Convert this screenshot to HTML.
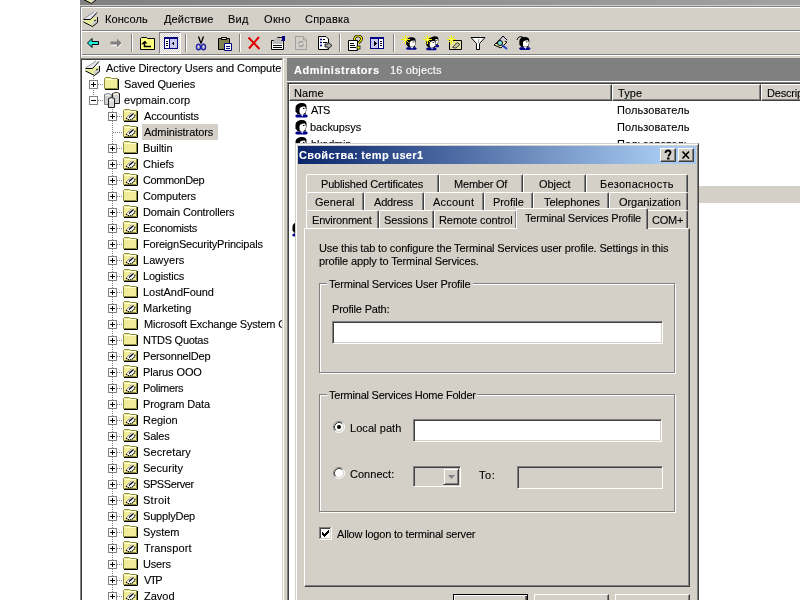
<!DOCTYPE html>
<html><head><meta charset="utf-8"><title>Active Directory Users and Computers</title>
<style>
html,body{margin:0;padding:0;width:800px;height:600px;overflow:hidden;background:#fff}
#scr{position:relative;will-change:transform;width:800px;height:600px;overflow:hidden;font-family:"Liberation Sans", sans-serif;font-size:11px;color:#000}
#scr div,#scr svg{position:absolute}
.t{white-space:pre;line-height:13px;font-size:11px;letter-spacing:-0.2px;-webkit-text-stroke:0.1px currentColor}
.b{font-weight:bold}
</style></head><body><div id="scr">
<svg width="0" height="0" style="position:absolute;left:0;top:0"><defs>
<g id="folder">
  <path d="M1.5 13.5V3.5L2.5 2.5H7.5L8.5 3.5H14.5V13.5Z" fill="#F0EC98" stroke="#8C8C40"/>
  <path d="M2 4.5H14" stroke="#FFFFD0"/>
  <path d="M15.5 4V14.5H2" stroke="#000" fill="none"/>
</g>
<g id="ou">
  <use href="#folder"/>
  <path d="M4 10.5L9.5 5.5L12.5 7L13 9.5L9.5 12.5L6.5 12.5Z" fill="#F8F8F8"/>
  <path d="M4.5 10.5L9.5 6" stroke="#909090" stroke-width="1"/>
  <path d="M4 11L6.5 12.8L9.5 12.8L13 9.5L12.8 7" stroke="#000" fill="none" stroke-width="1.1" stroke-dasharray="1.5 0.7"/>
  <path d="M7 10.5L11.5 6.5" stroke="#000" stroke-width="1.2"/>
</g>
<g id="domain">
  <path d="M0.5 2.5Q4 0.5 7.5 2.5V12.5H0.5Z" fill="#D0D0D0" stroke="#808080"/>
  <path d="M1.5 3.5Q4 2 6.5 3.5" stroke="#fff" fill="none"/>
  <path d="M8.5 1.5Q12 -0.5 15.5 1.5V11.5H8.5Z" fill="#D0D0D0" stroke="#202020"/>
  <path d="M9.5 2.5Q12 1 14.5 2.5" stroke="#F0F0D0" stroke-width="1.5" fill="none"/>
  <path d="M4.5 6.5Q7.5 4.5 10.5 6.5V15.5H4.5Z" fill="#D8D8D8" stroke="#202020"/>
  <path d="M5.5 8H9.5" stroke="#fff"/>
</g>
<g id="root">
  <path d="M0.5 11L9.5 15.5L14.5 11.5V6L7.5 7.5L0.5 8.5Z" fill="#E6EBA0"/>
  <path d="M9 11.5L14 7.5V11.5L9.5 15Z" fill="#D0D0D0"/>
  <path d="M0.5 11L9.5 15.5L14.5 11.5" stroke="#000" fill="none"/>
  <path d="M14.5 6V11.5" stroke="#000"/>
  <path d="M0.5 8L11 1H14L7.5 7.5Z" fill="#E8E8F4"/>
  <path d="M0.5 8L11 1" stroke="#909090"/>
  <path d="M0.5 8.5H7.5L14 1.5" stroke="#000" fill="none"/>
  <circle cx="12" cy="9.5" r="0.8" fill="#000"/>
</g>
<g id="user">
  <path d="M1.5 6C1.5 2.5 4.5 1 8 1C11 1 12.5 2.5 12.5 4.5V7.5L11.5 12.5H4L1.5 9.5Z" fill="#000"/>
  <path d="M5.5 7C6.5 5 9 4.2 11.2 4.8L11.6 6.5L12.4 7.5L11.8 8.5L11.6 10.5L9.5 12H6.5L5.5 10.5Z" fill="#fff"/>
  <path d="M9 6.5H10.5" stroke="#000" stroke-width="1"/>
  <path d="M1 14L2.5 12.5H12.5L14 14L12.5 15.5H2.5Z" fill="#00008C"/>
  <path d="M6.5 12.3L8.5 14.5L9.5 12.3Z" fill="#fff"/>
</g>
<g id="back">
  <path d="M2.5 8L7 3.5V6.5H13.5V9.5H7V12.5Z" fill="#20F0E0" stroke="#000" stroke-width="1"/>
</g>
<g id="fwd">
  <path d="M13.5 8L9 3.5V6.5H2.5V9.5H9V12.5Z" fill="#808080"/>
  <path d="M9.5 13L14 8.5M3 10.3H9" stroke="#fff" stroke-width="0.9"/>
</g>
<g id="upfolder">
  <path d="M0.5 14.5V3.5L1.5 2.5H6.5L7.5 3.5H14.5V14.5Z" fill="#FFFF80" stroke="#000"/>
  <path d="M5 6.5L3 8.5H4.5V11.5H11" stroke="#000" stroke-width="1.5" fill="none"/>
  <path d="M2.5 8.5L5 5.8L7.5 8.5Z" fill="#000"/>
</g>
<g id="tree" shape-rendering="crispEdges">
  <rect x="1" y="2" width="14" height="12" fill="#000080"/>
  <rect x="2" y="4" width="4" height="9" fill="#fff"/>
  <rect x="7" y="4" width="7" height="9" fill="#C8C8EC"/>
  <rect x="3" y="6" width="2" height="1" fill="#000"/><rect x="3" y="8" width="2" height="1" fill="#000"/><rect x="3" y="10" width="2" height="1" fill="#000"/>
  <path d="M11 6V11L8.5 8.5Z" fill="#000"/>
</g>
<g id="actpane" shape-rendering="crispEdges">
  <rect x="1" y="2" width="14" height="12" fill="#000080"/>
  <rect x="2" y="4" width="7" height="9" fill="#C8C8EC"/>
  <rect x="10" y="4" width="4" height="9" fill="#fff"/>
  <rect x="11" y="6" width="2" height="1" fill="#000"/><rect x="11" y="8" width="2" height="1" fill="#000"/><rect x="11" y="10" width="2" height="1" fill="#000"/>
  <path d="M5 6V11L7.5 8.5Z" fill="#000"/>
</g>
<g id="cut">
  <path d="M5.5 1.5L8 8.5M10.5 1.5L8 8.5" stroke="#000" stroke-width="1.3"/>
  <ellipse cx="5.5" cy="12" rx="2" ry="2.8" fill="none" stroke="#2020B0" stroke-width="1.4"/>
  <ellipse cx="10.5" cy="12" rx="2" ry="2.8" fill="none" stroke="#2020B0" stroke-width="1.4"/>
</g>
<g id="paste">
  <path d="M1.5 3.5H12.5V14.5H1.5Z" fill="#808050" stroke="#000"/>
  <path d="M4.5 2.5H9.5V4.5H4.5Z" fill="#E0E0C0" stroke="#000"/>
  <path d="M7.5 8.5H14.5V15.5H7.5Z" fill="#fff" stroke="#000080"/>
  <path d="M9 11.5H13M9 13.5H13" stroke="#000080"/>
</g>
<g id="del">
  <path d="M2.5 2.5L13.5 14M13 2L3 13.5" stroke="#E00000" stroke-width="2"/>
</g>
<g id="props">
  <path d="M1.5 5.5H13.5V14.5H1.5Z" fill="#fff" stroke="#000"/>
  <path d="M3 10.5H12M3 12.5H12" stroke="#000"/>
  <path d="M2.5 6.5L7.5 2L12.5 6.5V9H2.5Z" fill="#B8B8B8"/>
  <path d="M7.5 2.5H12.5" stroke="#000"/>
  <rect x="12" y="1" width="3" height="5" fill="#000080"/>
</g>
<g id="refresh">
  <path d="M2.5 1.5H10L13.5 5V14.5H2.5Z" fill="#D4D0C8" stroke="#A0A0A0"/>
  <path d="M10.5 1.5V5H13" fill="none" stroke="#A0A0A0"/>
  <path d="M5.5 9A2.5 2.5 0 0 1 10 7.5M10.5 9A2.5 2.5 0 0 1 6 10.5" fill="none" stroke="#A0A0A0" stroke-width="1.3"/>
</g>
<g id="export">
  <path d="M1.5 1.5H9L11.5 4V14.5H1.5Z" fill="#fff" stroke="#000"/>
  <path d="M3 4.5H5M3 7.5H5M3 10.5H5" stroke="#000080" stroke-width="1.5"/>
  <path d="M6 4.5H8M6 7.5H10" stroke="#000"/>
  <path d="M8 9H11V7L15 10.5L11 14V12H8Z" fill="#A8A8A8" stroke="#000" stroke-width="0.8"/>
</g>
<g id="help">
  <path d="M1.5 5.5H10.5V15.5H1.5Z" fill="#fff" stroke="#000"/>
  <path d="M3 8.5H7M3 10.5H8M3 12.5H9" stroke="#000"/>
  <path d="M7.5 5C7.5 2 9 1 11 1C13.5 1 15 2.5 14.5 4.5C14 6.5 11.5 6.5 11.5 9" fill="none" stroke="#000" stroke-width="2.6"/>
  <path d="M7.5 5C7.5 2 9 1 11 1C13.5 1 15 2.5 14.5 4.5C14 6.5 11.5 6.5 11.5 9" fill="none" stroke="#FFFF00" stroke-width="1.2"/>
  <rect x="10" y="11" width="3" height="3" fill="#FFFF00" stroke="#000" stroke-width="0.8"/>
</g>
<g id="spark">
  <path d="M4.5 0V9M0 4.5H9M1.3 1.3L7.7 7.7M7.7 1.3L1.3 7.7" stroke="#F0F000" stroke-width="1"/>
  <circle cx="4.5" cy="4.5" r="1.2" fill="#FFFF60"/>
</g>
<g id="newuser">
  <use href="#user" transform="translate(4,1.5) scale(0.85)"/>
  <use href="#spark"/>
</g>
<g id="newgroup">
  <use href="#user" transform="translate(6,0.5) scale(0.75)"/>
  <use href="#user" transform="translate(2,2) scale(0.85)"/>
  <use href="#spark"/>
</g>
<g id="newou">
  <path d="M2.5 14.5V5.5H14.5V14.5Z" fill="#E8E4A0" stroke="#000"/>
  <path d="M5.5 12.5L10 7.5L13 9.5L9 13Z" fill="#C8C8A0" stroke="#404040"/>
  <use href="#spark"/>
</g>
<g id="filter">
  <path d="M1 2.5H15L9.5 8.5V14.5H6.5V8.5Z" fill="#fff" stroke="#000"/>
  <path d="M9 4L8 8" stroke="#909090"/>
</g>
<g id="find">
  <path d="M1 10L8 4L14 7L8 13Z" fill="#E8E6A0" stroke="#000"/>
  <path d="M3 9L10 1L14 5" fill="#D0D0E0" stroke="#000"/>
  <circle cx="7" cy="8" r="2.5" fill="#80E0E0" stroke="#000"/>
  <path d="M9 10L14 14" stroke="#2040C0" stroke-width="2"/>
</g>
<g id="addmem">
  <use href="#user" transform="translate(2,1) scale(0.9)"/>
  <path d="M1 5C2 1 6 1 7 3" stroke="#000" fill="none"/>
  <path d="M6 1L8 3.5L5 4Z" fill="#000"/>
</g>
<g id="qmark">
  <path d="M5.5 5C5.5 3.5 6.5 2.5 8 2.5C9.5 2.5 10.5 3.5 10.5 4.8C10.5 6.3 8.5 6.5 8.5 8.5" fill="none" stroke="#000" stroke-width="1.8"/>
  <rect x="7" y="9.5" width="2.5" height="2" fill="#000"/>
</g>
<g id="xmark">
  <path d="M4.5 3.5L11 10.5M11 3.5L4.5 10.5" stroke="#000" stroke-width="1.6"/>
</g>
<g id="radio_off">
  <circle cx="6" cy="6" r="5" fill="#fff"/>
  <path d="M2.11 9.89A5.5 5.5 0 0 1 9.89 2.11" fill="none" stroke="#808080" stroke-width="1"/>
  <path d="M9.89 2.11A5.5 5.5 0 0 1 2.11 9.89" fill="none" stroke="#fff" stroke-width="1"/>
  <path d="M2.82 9.18A4.5 4.5 0 0 1 9.18 2.82" fill="none" stroke="#404040" stroke-width="1"/>
  <path d="M9.18 2.82A4.5 4.5 0 0 1 2.82 9.18" fill="none" stroke="#D4D0C8" stroke-width="1"/>
</g>
<g id="radio_on">
  <use href="#radio_off"/>
  <circle cx="6" cy="6" r="2" fill="#000"/>
</g>
<g id="check" shape-rendering="crispEdges">
  <rect x="0" y="0" width="13" height="13" fill="#fff"/>
  <rect x="0" y="0" width="12" height="1" fill="#808080"/><rect x="0" y="0" width="1" height="12" fill="#808080"/>
  <rect x="1" y="1" width="10" height="1" fill="#404040"/><rect x="1" y="1" width="1" height="10" fill="#404040"/>
  <rect x="1" y="11" width="11" height="1" fill="#D4D0C8"/><rect x="11" y="1" width="1" height="11" fill="#D4D0C8"/>
  <rect x="0" y="12" width="13" height="1" fill="#fff"/><rect x="12" y="0" width="1" height="13" fill="#fff"/>
  <path d="M3 5h1v3h-1zM4 6h1v3h-1zM5 7h1v3h-1zM6 6h1v3h-1zM7 5h1v3h-1zM8 4h1v3h-1zM9 3h1v3h-1z" fill="#000"/>
</g>

</defs></svg>
<div style="left:80px;top:0px;width:720px;height:600px;background:#D4D0C8;"></div>
<div style="left:80px;top:0px;width:720px;height:5px;background:linear-gradient(90deg,#808080,#A2A2A2);"></div>
<div style="left:80px;top:6px;width:720px;height:1px;background:#808080;"></div>
<div style="left:81px;top:7px;width:719px;height:1px;background:#FFFFFF;"></div>
<div style="left:80px;top:6px;width:1px;height:594px;background:#808080;"></div>
<div style="left:81px;top:7px;width:1px;height:50px;background:#FFFFFF;"></div>
<svg style="left:82px;top:-12px" width="16" height="16" viewBox="0 0 16 16"><use href="#root"/></svg>
<div style="left:82px;top:30px;width:718px;height:1px;background:#808080;"></div>
<div style="left:82px;top:31px;width:718px;height:1px;background:#FFFFFF;"></div>
<div style="left:82px;top:54px;width:718px;height:1px;background:#808080;"></div>
<div style="left:82px;top:55px;width:718px;height:1px;background:#FFFFFF;"></div>
<svg style="left:83px;top:11px" width="16" height="16" viewBox="0 0 16 16"><use href="#root"/></svg>
<div class="t" id="xc0fab7" style="left:105.00px;top:13.00px;letter-spacing:0.067px;">Консоль</div>
<div class="t" id="x54db8a" style="left:164.00px;top:13.00px;letter-spacing:0.143px;">Действие</div>
<div class="t" id="xa3275b" style="left:228.00px;top:13.00px;letter-spacing:0.200px;">Вид</div>
<div class="t" id="xbd36c4" style="left:264.00px;top:13.00px;letter-spacing:0.333px;">Окно</div>
<div class="t" id="xf32c9a" style="left:305.00px;top:13.00px;letter-spacing:0.200px;">Справка</div>
<svg style="left:85px;top:35px" width="16" height="16" viewBox="0 0 16 16"><use href="#back"/></svg>
<svg style="left:108px;top:35px" width="16" height="16" viewBox="0 0 16 16"><use href="#fwd"/></svg>
<div style="left:131px;top:34px;width:1px;height:18px;background:#808080;"></div>
<div style="left:132px;top:34px;width:1px;height:18px;background:#FFFFFF;"></div>
<svg style="left:140px;top:35px" width="16" height="16" viewBox="0 0 16 16"><use href="#upfolder"/></svg>
<div style="left:159px;top:32px;width:22px;height:22px;box-sizing:border-box;border-top:1px solid #808080;border-left:1px solid #808080;border-right:1px solid #fff;border-bottom:1px solid #fff;background:repeating-conic-gradient(#fff 0 25%,#D4D0C8 0 50%) 0 0/2px 2px"></div>
<svg style="left:163px;top:35px" width="16" height="16" viewBox="0 0 16 16"><use href="#tree"/></svg>
<div style="left:185px;top:34px;width:1px;height:18px;background:#808080;"></div>
<div style="left:186px;top:34px;width:1px;height:18px;background:#FFFFFF;"></div>
<svg style="left:193px;top:35px" width="16" height="16" viewBox="0 0 16 16"><use href="#cut"/></svg>
<svg style="left:217px;top:35px" width="16" height="16" viewBox="0 0 16 16"><use href="#paste"/></svg>
<div style="left:239px;top:34px;width:1px;height:18px;background:#808080;"></div>
<div style="left:240px;top:34px;width:1px;height:18px;background:#FFFFFF;"></div>
<svg style="left:246px;top:35px" width="16" height="16" viewBox="0 0 16 16"><use href="#del"/></svg>
<svg style="left:270px;top:35px" width="16" height="16" viewBox="0 0 16 16"><use href="#props"/></svg>
<svg style="left:293px;top:35px" width="16" height="16" viewBox="0 0 16 16"><use href="#refresh"/></svg>
<svg style="left:317px;top:35px" width="16" height="16" viewBox="0 0 16 16"><use href="#export"/></svg>
<div style="left:339px;top:34px;width:1px;height:18px;background:#808080;"></div>
<div style="left:340px;top:34px;width:1px;height:18px;background:#FFFFFF;"></div>
<svg style="left:347px;top:35px" width="16" height="16" viewBox="0 0 16 16"><use href="#help"/></svg>
<svg style="left:369px;top:35px" width="16" height="16" viewBox="0 0 16 16"><use href="#actpane"/></svg>
<div style="left:393px;top:34px;width:1px;height:18px;background:#808080;"></div>
<div style="left:394px;top:34px;width:1px;height:18px;background:#FFFFFF;"></div>
<svg style="left:401px;top:35px" width="16" height="16" viewBox="0 0 16 16"><use href="#newuser"/></svg>
<svg style="left:423px;top:35px" width="16" height="16" viewBox="0 0 16 16"><use href="#newgroup"/></svg>
<svg style="left:447px;top:35px" width="16" height="16" viewBox="0 0 16 16"><use href="#newou"/></svg>
<svg style="left:470px;top:35px" width="16" height="16" viewBox="0 0 16 16"><use href="#filter"/></svg>
<svg style="left:493px;top:35px" width="16" height="16" viewBox="0 0 16 16"><use href="#find"/></svg>
<svg style="left:516px;top:35px" width="16" height="16" viewBox="0 0 16 16"><use href="#addmem"/></svg>
<div style="left:80px;top:58px;width:204px;height:542px;background:#FFFFFF;"></div>
<div style="left:80px;top:58px;width:203px;height:1px;background:#808080;"></div>
<div style="left:81px;top:59px;width:202px;height:1px;background:#404040;"></div>
<div style="left:80px;top:58px;width:1px;height:542px;background:#808080;"></div>
<div style="left:81px;top:59px;width:1px;height:541px;background:#404040;"></div>
<div style="left:282px;top:59px;width:1px;height:541px;background:#D4D0C8;"></div>
<div style="left:283px;top:58px;width:1px;height:542px;background:#FFFFFF;"></div>
<div style="left:82px;top:60px;width:200px;height:540px;overflow:hidden">
<svg style="left:3px;top:0px" width="16" height="16"><use href="#root"/></svg>
<div class="t" style="left:24.00px;top:2.00px;letter-spacing:-0.080px;">Active Directory Users and Computers</div>
<div style="left:11px;top:16px;width:1px;height:25px;background:repeating-linear-gradient(180deg,#808080 0 1px,transparent 1px 2px)"></div>
<div style="left:7px;top:20px;width:9px;height:9px;box-sizing:border-box;border:1px solid #808080;background:#fff"></div>
<div style="left:9px;top:24px;width:5px;height:1px;background:#000"></div>
<div style="left:11px;top:22px;width:1px;height:5px;background:#000"></div>
<div style="left:16px;top:24px;width:6px;height:1px;background:repeating-linear-gradient(90deg,#808080 0 1px,transparent 1px 2px)"></div>
<svg style="left:21px;top:15px" width="16" height="16"><use href="#folder"/></svg>
<div class="t" id="x9c1bc7" style="left:42.00px;top:18.00px;letter-spacing:-0.133px;">Saved Queries</div>
<div style="left:7px;top:36px;width:9px;height:9px;box-sizing:border-box;border:1px solid #808080;background:#fff"></div>
<div style="left:9px;top:40px;width:5px;height:1px;background:#000"></div>
<div style="left:16px;top:40px;width:6px;height:1px;background:repeating-linear-gradient(90deg,#808080 0 1px,transparent 1px 2px)"></div>
<svg style="left:22px;top:32px" width="16" height="16"><use href="#domain"/></svg>
<div class="t" id="xbd833f" style="left:42.00px;top:34.00px;letter-spacing:0.018px;">evpmain.corp</div>
<div style="left:30px;top:49px;width:1px;height:491px;background:repeating-linear-gradient(180deg,#808080 0 1px,transparent 1px 2px)"></div>
<div style="left:26px;top:52px;width:9px;height:9px;box-sizing:border-box;border:1px solid #808080;background:#fff"></div>
<div style="left:28px;top:56px;width:5px;height:1px;background:#000"></div>
<div style="left:30px;top:54px;width:1px;height:5px;background:#000"></div>
<div style="left:35px;top:56px;width:6px;height:1px;background:repeating-linear-gradient(90deg,#808080 0 1px,transparent 1px 2px)"></div>
<svg style="left:40px;top:47px" width="16" height="16"><use href="#ou"/></svg>
<div class="t" id="x9938e6" style="left:62.00px;top:50.00px;letter-spacing:-0.120px;">Accountists</div>
<div style="left:31px;top:72px;width:10px;height:1px;background:repeating-linear-gradient(90deg,#808080 0 1px,transparent 1px 2px)"></div>
<svg style="left:40px;top:63px" width="16" height="16"><use href="#ou"/></svg>
<div style="left:60px;top:64px;width:76px;height:16px;background:#D4D0C8"></div>
<div class="t" id="xa94c28" style="left:62.00px;top:66.00px;letter-spacing:-0.077px;">Administrators</div>
<div style="left:26px;top:84px;width:9px;height:9px;box-sizing:border-box;border:1px solid #808080;background:#fff"></div>
<div style="left:28px;top:88px;width:5px;height:1px;background:#000"></div>
<div style="left:30px;top:86px;width:1px;height:5px;background:#000"></div>
<div style="left:35px;top:88px;width:6px;height:1px;background:repeating-linear-gradient(90deg,#808080 0 1px,transparent 1px 2px)"></div>
<svg style="left:40px;top:79px" width="16" height="16"><use href="#folder"/></svg>
<div class="t" id="x11b7ae" style="left:61.00px;top:82.00px;letter-spacing:-0.067px;">Builtin</div>
<div style="left:26px;top:100px;width:9px;height:9px;box-sizing:border-box;border:1px solid #808080;background:#fff"></div>
<div style="left:28px;top:104px;width:5px;height:1px;background:#000"></div>
<div style="left:30px;top:102px;width:1px;height:5px;background:#000"></div>
<div style="left:35px;top:104px;width:6px;height:1px;background:repeating-linear-gradient(90deg,#808080 0 1px,transparent 1px 2px)"></div>
<svg style="left:40px;top:95px" width="16" height="16"><use href="#ou"/></svg>
<div class="t" id="xf1077e" style="left:61.00px;top:98.00px;letter-spacing:-0.040px;">Chiefs</div>
<div style="left:26px;top:116px;width:9px;height:9px;box-sizing:border-box;border:1px solid #808080;background:#fff"></div>
<div style="left:28px;top:120px;width:5px;height:1px;background:#000"></div>
<div style="left:30px;top:118px;width:1px;height:5px;background:#000"></div>
<div style="left:35px;top:120px;width:6px;height:1px;background:repeating-linear-gradient(90deg,#808080 0 1px,transparent 1px 2px)"></div>
<svg style="left:40px;top:111px" width="16" height="16"><use href="#ou"/></svg>
<div class="t" id="xedbade" style="left:61.00px;top:114.00px;letter-spacing:-0.400px;">CommonDep</div>
<div style="left:26px;top:132px;width:9px;height:9px;box-sizing:border-box;border:1px solid #808080;background:#fff"></div>
<div style="left:28px;top:136px;width:5px;height:1px;background:#000"></div>
<div style="left:30px;top:134px;width:1px;height:5px;background:#000"></div>
<div style="left:35px;top:136px;width:6px;height:1px;background:repeating-linear-gradient(90deg,#808080 0 1px,transparent 1px 2px)"></div>
<svg style="left:40px;top:127px" width="16" height="16"><use href="#folder"/></svg>
<div class="t" id="xeaa24b" style="left:61.00px;top:130.00px;letter-spacing:-0.100px;">Computers</div>
<div style="left:26px;top:148px;width:9px;height:9px;box-sizing:border-box;border:1px solid #808080;background:#fff"></div>
<div style="left:28px;top:152px;width:5px;height:1px;background:#000"></div>
<div style="left:30px;top:150px;width:1px;height:5px;background:#000"></div>
<div style="left:35px;top:152px;width:6px;height:1px;background:repeating-linear-gradient(90deg,#808080 0 1px,transparent 1px 2px)"></div>
<svg style="left:40px;top:143px" width="16" height="16"><use href="#ou"/></svg>
<div class="t" id="xcfd4d3" style="left:61.00px;top:146.00px;letter-spacing:-0.153px;">Domain Controllers</div>
<div style="left:26px;top:164px;width:9px;height:9px;box-sizing:border-box;border:1px solid #808080;background:#fff"></div>
<div style="left:28px;top:168px;width:5px;height:1px;background:#000"></div>
<div style="left:30px;top:166px;width:1px;height:5px;background:#000"></div>
<div style="left:35px;top:168px;width:6px;height:1px;background:repeating-linear-gradient(90deg,#808080 0 1px,transparent 1px 2px)"></div>
<svg style="left:40px;top:159px" width="16" height="16"><use href="#ou"/></svg>
<div class="t" id="x704b0f" style="left:61.00px;top:162.00px;letter-spacing:-0.289px;">Economists</div>
<div style="left:26px;top:180px;width:9px;height:9px;box-sizing:border-box;border:1px solid #808080;background:#fff"></div>
<div style="left:28px;top:184px;width:5px;height:1px;background:#000"></div>
<div style="left:30px;top:182px;width:1px;height:5px;background:#000"></div>
<div style="left:35px;top:184px;width:6px;height:1px;background:repeating-linear-gradient(90deg,#808080 0 1px,transparent 1px 2px)"></div>
<svg style="left:40px;top:175px" width="16" height="16"><use href="#folder"/></svg>
<div class="t" id="xa52823" style="left:61.00px;top:178.00px;letter-spacing:-0.200px;">ForeignSecurityPrincipals</div>
<div style="left:26px;top:196px;width:9px;height:9px;box-sizing:border-box;border:1px solid #808080;background:#fff"></div>
<div style="left:28px;top:200px;width:5px;height:1px;background:#000"></div>
<div style="left:30px;top:198px;width:1px;height:5px;background:#000"></div>
<div style="left:35px;top:200px;width:6px;height:1px;background:repeating-linear-gradient(90deg,#808080 0 1px,transparent 1px 2px)"></div>
<svg style="left:40px;top:191px" width="16" height="16"><use href="#ou"/></svg>
<div class="t" id="x2168b0" style="left:61.00px;top:194.00px;letter-spacing:0.067px;">Lawyers</div>
<div style="left:26px;top:212px;width:9px;height:9px;box-sizing:border-box;border:1px solid #808080;background:#fff"></div>
<div style="left:28px;top:216px;width:5px;height:1px;background:#000"></div>
<div style="left:30px;top:214px;width:1px;height:5px;background:#000"></div>
<div style="left:35px;top:216px;width:6px;height:1px;background:repeating-linear-gradient(90deg,#808080 0 1px,transparent 1px 2px)"></div>
<svg style="left:40px;top:207px" width="16" height="16"><use href="#ou"/></svg>
<div class="t" id="x5b3423" style="left:61.00px;top:210.00px;letter-spacing:-0.200px;">Logistics</div>
<div style="left:26px;top:228px;width:9px;height:9px;box-sizing:border-box;border:1px solid #808080;background:#fff"></div>
<div style="left:28px;top:232px;width:5px;height:1px;background:#000"></div>
<div style="left:30px;top:230px;width:1px;height:5px;background:#000"></div>
<div style="left:35px;top:232px;width:6px;height:1px;background:repeating-linear-gradient(90deg,#808080 0 1px,transparent 1px 2px)"></div>
<svg style="left:40px;top:223px" width="16" height="16"><use href="#folder"/></svg>
<div class="t" id="x533eed" style="left:61.00px;top:226.00px;letter-spacing:-0.055px;">LostAndFound</div>
<div style="left:26px;top:244px;width:9px;height:9px;box-sizing:border-box;border:1px solid #808080;background:#fff"></div>
<div style="left:28px;top:248px;width:5px;height:1px;background:#000"></div>
<div style="left:30px;top:246px;width:1px;height:5px;background:#000"></div>
<div style="left:35px;top:248px;width:6px;height:1px;background:repeating-linear-gradient(90deg,#808080 0 1px,transparent 1px 2px)"></div>
<svg style="left:40px;top:239px" width="16" height="16"><use href="#ou"/></svg>
<div class="t" id="xb19039" style="left:61.00px;top:242.00px;letter-spacing:0.000px;">Marketing</div>
<div style="left:26px;top:260px;width:9px;height:9px;box-sizing:border-box;border:1px solid #808080;background:#fff"></div>
<div style="left:28px;top:264px;width:5px;height:1px;background:#000"></div>
<div style="left:30px;top:262px;width:1px;height:5px;background:#000"></div>
<div style="left:35px;top:264px;width:6px;height:1px;background:repeating-linear-gradient(90deg,#808080 0 1px,transparent 1px 2px)"></div>
<svg style="left:40px;top:255px" width="16" height="16"><use href="#folder"/></svg>
<div class="t" style="left:62.00px;top:258.00px;letter-spacing:-0.200px;">Microsoft Exchange System Objects</div>
<div style="left:26px;top:276px;width:9px;height:9px;box-sizing:border-box;border:1px solid #808080;background:#fff"></div>
<div style="left:28px;top:280px;width:5px;height:1px;background:#000"></div>
<div style="left:30px;top:278px;width:1px;height:5px;background:#000"></div>
<div style="left:35px;top:280px;width:6px;height:1px;background:repeating-linear-gradient(90deg,#808080 0 1px,transparent 1px 2px)"></div>
<svg style="left:40px;top:271px" width="16" height="16"><use href="#folder"/></svg>
<div class="t" id="xdeddde" style="left:61.00px;top:274.00px;letter-spacing:-0.280px;">NTDS Quotas</div>
<div style="left:26px;top:292px;width:9px;height:9px;box-sizing:border-box;border:1px solid #808080;background:#fff"></div>
<div style="left:28px;top:296px;width:5px;height:1px;background:#000"></div>
<div style="left:30px;top:294px;width:1px;height:5px;background:#000"></div>
<div style="left:35px;top:296px;width:6px;height:1px;background:repeating-linear-gradient(90deg,#808080 0 1px,transparent 1px 2px)"></div>
<svg style="left:40px;top:287px" width="16" height="16"><use href="#ou"/></svg>
<div class="t" id="x38ea3e" style="left:61.00px;top:290.00px;letter-spacing:-0.200px;">PersonnelDep</div>
<div style="left:26px;top:308px;width:9px;height:9px;box-sizing:border-box;border:1px solid #808080;background:#fff"></div>
<div style="left:28px;top:312px;width:5px;height:1px;background:#000"></div>
<div style="left:30px;top:310px;width:1px;height:5px;background:#000"></div>
<div style="left:35px;top:312px;width:6px;height:1px;background:repeating-linear-gradient(90deg,#808080 0 1px,transparent 1px 2px)"></div>
<svg style="left:40px;top:303px" width="16" height="16"><use href="#ou"/></svg>
<div class="t" id="xb19d05" style="left:61.00px;top:306.00px;letter-spacing:-0.111px;">Plarus OOO</div>
<div style="left:26px;top:324px;width:9px;height:9px;box-sizing:border-box;border:1px solid #808080;background:#fff"></div>
<div style="left:28px;top:328px;width:5px;height:1px;background:#000"></div>
<div style="left:30px;top:326px;width:1px;height:5px;background:#000"></div>
<div style="left:35px;top:328px;width:6px;height:1px;background:repeating-linear-gradient(90deg,#808080 0 1px,transparent 1px 2px)"></div>
<svg style="left:40px;top:319px" width="16" height="16"><use href="#ou"/></svg>
<div class="t" id="x99c45a" style="left:61.00px;top:322.00px;letter-spacing:-0.314px;">Polimers</div>
<div style="left:26px;top:340px;width:9px;height:9px;box-sizing:border-box;border:1px solid #808080;background:#fff"></div>
<div style="left:28px;top:344px;width:5px;height:1px;background:#000"></div>
<div style="left:30px;top:342px;width:1px;height:5px;background:#000"></div>
<div style="left:35px;top:344px;width:6px;height:1px;background:repeating-linear-gradient(90deg,#808080 0 1px,transparent 1px 2px)"></div>
<svg style="left:40px;top:335px" width="16" height="16"><use href="#folder"/></svg>
<div class="t" id="x6ffb5e" style="left:61.00px;top:338.00px;letter-spacing:-0.127px;">Program Data</div>
<div style="left:26px;top:356px;width:9px;height:9px;box-sizing:border-box;border:1px solid #808080;background:#fff"></div>
<div style="left:28px;top:360px;width:5px;height:1px;background:#000"></div>
<div style="left:30px;top:358px;width:1px;height:5px;background:#000"></div>
<div style="left:35px;top:360px;width:6px;height:1px;background:repeating-linear-gradient(90deg,#808080 0 1px,transparent 1px 2px)"></div>
<svg style="left:40px;top:351px" width="16" height="16"><use href="#ou"/></svg>
<div class="t" id="x1c398a" style="left:61.00px;top:354.00px;letter-spacing:-0.040px;">Region</div>
<div style="left:26px;top:372px;width:9px;height:9px;box-sizing:border-box;border:1px solid #808080;background:#fff"></div>
<div style="left:28px;top:376px;width:5px;height:1px;background:#000"></div>
<div style="left:30px;top:374px;width:1px;height:5px;background:#000"></div>
<div style="left:35px;top:376px;width:6px;height:1px;background:repeating-linear-gradient(90deg,#808080 0 1px,transparent 1px 2px)"></div>
<svg style="left:40px;top:367px" width="16" height="16"><use href="#ou"/></svg>
<div class="t" id="x931065" style="left:61.00px;top:370.00px;letter-spacing:-0.200px;">Sales</div>
<div style="left:26px;top:388px;width:9px;height:9px;box-sizing:border-box;border:1px solid #808080;background:#fff"></div>
<div style="left:28px;top:392px;width:5px;height:1px;background:#000"></div>
<div style="left:30px;top:390px;width:1px;height:5px;background:#000"></div>
<div style="left:35px;top:392px;width:6px;height:1px;background:repeating-linear-gradient(90deg,#808080 0 1px,transparent 1px 2px)"></div>
<svg style="left:40px;top:383px" width="16" height="16"><use href="#ou"/></svg>
<div class="t" id="x12bd3a" style="left:61.00px;top:386.00px;letter-spacing:0.100px;">Secretary</div>
<div style="left:26px;top:404px;width:9px;height:9px;box-sizing:border-box;border:1px solid #808080;background:#fff"></div>
<div style="left:28px;top:408px;width:5px;height:1px;background:#000"></div>
<div style="left:30px;top:406px;width:1px;height:5px;background:#000"></div>
<div style="left:35px;top:408px;width:6px;height:1px;background:repeating-linear-gradient(90deg,#808080 0 1px,transparent 1px 2px)"></div>
<svg style="left:40px;top:399px" width="16" height="16"><use href="#ou"/></svg>
<div class="t" id="xc9ea68" style="left:61.00px;top:402.00px;letter-spacing:0.029px;">Security</div>
<div style="left:26px;top:420px;width:9px;height:9px;box-sizing:border-box;border:1px solid #808080;background:#fff"></div>
<div style="left:28px;top:424px;width:5px;height:1px;background:#000"></div>
<div style="left:30px;top:422px;width:1px;height:5px;background:#000"></div>
<div style="left:35px;top:424px;width:6px;height:1px;background:repeating-linear-gradient(90deg,#808080 0 1px,transparent 1px 2px)"></div>
<svg style="left:40px;top:415px" width="16" height="16"><use href="#ou"/></svg>
<div class="t" id="xf7ef4e" style="left:61.00px;top:418.00px;letter-spacing:-0.400px;">SPSServer</div>
<div style="left:26px;top:436px;width:9px;height:9px;box-sizing:border-box;border:1px solid #808080;background:#fff"></div>
<div style="left:28px;top:440px;width:5px;height:1px;background:#000"></div>
<div style="left:30px;top:438px;width:1px;height:5px;background:#000"></div>
<div style="left:35px;top:440px;width:6px;height:1px;background:repeating-linear-gradient(90deg,#808080 0 1px,transparent 1px 2px)"></div>
<svg style="left:40px;top:431px" width="16" height="16"><use href="#ou"/></svg>
<div class="t" id="x67b9af" style="left:61.00px;top:434.00px;letter-spacing:0.280px;">Stroit</div>
<div style="left:26px;top:452px;width:9px;height:9px;box-sizing:border-box;border:1px solid #808080;background:#fff"></div>
<div style="left:28px;top:456px;width:5px;height:1px;background:#000"></div>
<div style="left:30px;top:454px;width:1px;height:5px;background:#000"></div>
<div style="left:35px;top:456px;width:6px;height:1px;background:repeating-linear-gradient(90deg,#808080 0 1px,transparent 1px 2px)"></div>
<svg style="left:40px;top:447px" width="16" height="16"><use href="#ou"/></svg>
<div class="t" id="xf0ac97" style="left:61.00px;top:450.00px;letter-spacing:-0.200px;">SupplyDep</div>
<div style="left:26px;top:468px;width:9px;height:9px;box-sizing:border-box;border:1px solid #808080;background:#fff"></div>
<div style="left:28px;top:472px;width:5px;height:1px;background:#000"></div>
<div style="left:30px;top:470px;width:1px;height:5px;background:#000"></div>
<div style="left:35px;top:472px;width:6px;height:1px;background:repeating-linear-gradient(90deg,#808080 0 1px,transparent 1px 2px)"></div>
<svg style="left:40px;top:463px" width="16" height="16"><use href="#folder"/></svg>
<div class="t" id="xf3f092" style="left:61.00px;top:466.00px;letter-spacing:-0.040px;">System</div>
<div style="left:26px;top:484px;width:9px;height:9px;box-sizing:border-box;border:1px solid #808080;background:#fff"></div>
<div style="left:28px;top:488px;width:5px;height:1px;background:#000"></div>
<div style="left:30px;top:486px;width:1px;height:5px;background:#000"></div>
<div style="left:35px;top:488px;width:6px;height:1px;background:repeating-linear-gradient(90deg,#808080 0 1px,transparent 1px 2px)"></div>
<svg style="left:40px;top:479px" width="16" height="16"><use href="#ou"/></svg>
<div class="t" id="x579f03" style="left:62.00px;top:482.00px;letter-spacing:0.100px;">Transport</div>
<div style="left:26px;top:500px;width:9px;height:9px;box-sizing:border-box;border:1px solid #808080;background:#fff"></div>
<div style="left:28px;top:504px;width:5px;height:1px;background:#000"></div>
<div style="left:30px;top:502px;width:1px;height:5px;background:#000"></div>
<div style="left:35px;top:504px;width:6px;height:1px;background:repeating-linear-gradient(90deg,#808080 0 1px,transparent 1px 2px)"></div>
<svg style="left:40px;top:495px" width="16" height="16"><use href="#folder"/></svg>
<div class="t" id="xa87a19" style="left:61.00px;top:498.00px;letter-spacing:-0.200px;">Users</div>
<div style="left:26px;top:516px;width:9px;height:9px;box-sizing:border-box;border:1px solid #808080;background:#fff"></div>
<div style="left:28px;top:520px;width:5px;height:1px;background:#000"></div>
<div style="left:30px;top:518px;width:1px;height:5px;background:#000"></div>
<div style="left:35px;top:520px;width:6px;height:1px;background:repeating-linear-gradient(90deg,#808080 0 1px,transparent 1px 2px)"></div>
<svg style="left:40px;top:511px" width="16" height="16"><use href="#ou"/></svg>
<div class="t" id="x12a12f" style="left:62.00px;top:514.00px;letter-spacing:-1.400px;">VTP</div>
<div style="left:26px;top:532px;width:9px;height:9px;box-sizing:border-box;border:1px solid #808080;background:#fff"></div>
<div style="left:28px;top:536px;width:5px;height:1px;background:#000"></div>
<div style="left:30px;top:534px;width:1px;height:5px;background:#000"></div>
<div style="left:35px;top:536px;width:6px;height:1px;background:repeating-linear-gradient(90deg,#808080 0 1px,transparent 1px 2px)"></div>
<svg style="left:40px;top:527px" width="16" height="16"><use href="#ou"/></svg>
<div class="t" id="x2dc95c" style="left:62.00px;top:530.00px;letter-spacing:0.000px;">Zavod</div>
</div>
<div style="left:287px;top:58px;width:513px;height:23px;background:#808080;"></div>
<div style="left:287px;top:81px;width:513px;height:1px;background:#FFFFFF;"></div>
<div class="t b" id="x9026cc" style="left:294.00px;top:64.00px;letter-spacing:0.523px;color:#fff;">Administrators</div>
<div class="t" id="x7fbe10" style="left:390.00px;top:64.00px;letter-spacing:0.156px;color:#fff;">16 objects</div>
<div style="left:287px;top:82px;width:513px;height:518px;background:#FFFFFF;"></div>
<div style="left:287px;top:82px;width:513px;height:1px;background:#808080;"></div>
<div style="left:288px;top:83px;width:512px;height:1px;background:#404040;"></div>
<div style="left:287px;top:82px;width:1px;height:518px;background:#808080;"></div>
<div style="left:288px;top:83px;width:1px;height:517px;background:#404040;"></div>
<div style="left:289px;top:84px;width:323px;height:17px;background:#D4D0C8;box-sizing:border-box;border-top:1px solid #fff;border-left:1px solid #fff;border-right:1px solid #404040;border-bottom:1px solid #404040;box-shadow:inset -1px -1px 0 #808080"></div>
<div class="t" id="x671929" style="left:294.00px;top:87.00px;letter-spacing:0.067px;">Name</div>
<div style="left:612px;top:84px;width:149px;height:17px;background:#D4D0C8;box-sizing:border-box;border-top:1px solid #fff;border-left:1px solid #fff;border-right:1px solid #404040;border-bottom:1px solid #404040;box-shadow:inset -1px -1px 0 #808080"></div>
<div class="t" id="x4f2174" style="left:618.00px;top:87.00px;letter-spacing:0.067px;">Type</div>
<div style="left:761px;top:84px;width:60px;height:17px;background:#D4D0C8;box-sizing:border-box;border-top:1px solid #fff;border-left:1px solid #fff;border-right:1px solid #404040;border-bottom:1px solid #404040;box-shadow:inset -1px -1px 0 #808080"></div>
<div class="t" style="left:767.00px;top:87.00px;letter-spacing:-0.200px;">Descrip</div>
<svg style="left:294px;top:102px" width="16" height="16" viewBox="0 0 16 16"><use href="#user"/></svg>
<div class="t" id="xb0b399" style="left:311.00px;top:104.00px;letter-spacing:-0.600px;">ATS</div>
<div class="t" id="x7657e9" style="left:617.00px;top:104.00px;letter-spacing:0.091px;">Пользователь</div>
<svg style="left:294px;top:119px" width="16" height="16" viewBox="0 0 16 16"><use href="#user"/></svg>
<div class="t" id="xdb160d" style="left:310.00px;top:121.00px;letter-spacing:-0.100px;">backupsys</div>
<div class="t" id="x046a05" style="left:617.00px;top:121.00px;letter-spacing:0.091px;">Пользователь</div>
<svg style="left:294px;top:136px" width="16" height="16" viewBox="0 0 16 16"><use href="#user"/></svg>
<div class="t" style="left:311.00px;top:138.00px;letter-spacing:-0.200px;">bkadmin</div>
<div class="t" style="left:617.00px;top:138.00px;letter-spacing:0.090px;">Пользователь</div>
<div style="left:310px;top:186px;width:490px;height:17px;background:#D4D0C8;"></div>
<svg style="left:291px;top:221px" width="16" height="16" viewBox="0 0 16 16"><use href="#user"/></svg>
<div style="left:295px;top:143px;width:404px;height:470px;background:#D4D0C8;box-sizing:border-box;border-top:1px solid #D4D0C8;border-left:1px solid #D4D0C8;border-right:1px solid #404040;border-bottom:1px solid #404040;box-shadow:inset 1px 1px 0 #fff,inset -1px -1px 0 #808080"></div>
<div style="left:298px;top:146px;width:398px;height:18px;background:linear-gradient(90deg,#0A246A,#A6CAF0 92%);"></div>
<div class="t b" id="x1c11c1" style="left:299.00px;top:149.00px;letter-spacing:0.334px;color:#fff;">Свойства: temp user1</div>
<div style="left:660px;top:148px;width:16px;height:14px;box-sizing:border-box;background:#D4D0C8;border-top:1px solid #fff;border-left:1px solid #fff;border-right:1px solid #404040;border-bottom:1px solid #404040;box-shadow:inset -1px -1px 0 #808080"></div>
<svg style="left:660px;top:148px" width="16" height="14" viewBox="0 0 16 14"><use href="#qmark"/></svg>
<div style="left:678px;top:148px;width:16px;height:14px;box-sizing:border-box;background:#D4D0C8;border-top:1px solid #fff;border-left:1px solid #fff;border-right:1px solid #404040;border-bottom:1px solid #404040;box-shadow:inset -1px -1px 0 #808080"></div>
<svg style="left:678px;top:148px" width="16" height="14" viewBox="0 0 16 14"><use href="#xmark"/></svg>
<div style="left:304px;top:228px;width:386px;height:359px;box-sizing:border-box;background:#D4D0C8;border-top:1px solid #fff;border-left:1px solid #fff;border-right:1px solid #404040;border-bottom:1px solid #404040;box-shadow:inset -1px -1px 0 #808080"></div>
<div style="left:306px;top:174px;width:133px;height:18px;box-sizing:border-box;background:#D4D0C8;border-top:1px solid #fff;border-left:1px solid #fff;border-right:1px solid #404040;border-radius:2px 2px 0 0;box-shadow:inset -1px 0 0 #808080"></div>
<div class="t" id="xd63d5e" style="left:321.00px;top:178.00px;letter-spacing:-0.200px;">Published Certificates</div>
<div style="left:439px;top:174px;width:84px;height:18px;box-sizing:border-box;background:#D4D0C8;border-top:1px solid #fff;border-left:1px solid #fff;border-right:1px solid #404040;border-radius:2px 2px 0 0;box-shadow:inset -1px 0 0 #808080"></div>
<div class="t" id="xa757af" style="left:454.00px;top:178.00px;letter-spacing:-0.200px;">Member Of</div>
<div style="left:523px;top:174px;width:63px;height:18px;box-sizing:border-box;background:#D4D0C8;border-top:1px solid #fff;border-left:1px solid #fff;border-right:1px solid #404040;border-radius:2px 2px 0 0;box-shadow:inset -1px 0 0 #808080"></div>
<div class="t" id="xba69c7" style="left:539.00px;top:178.00px;letter-spacing:-0.040px;">Object</div>
<div style="left:586px;top:174px;width:102px;height:18px;box-sizing:border-box;background:#D4D0C8;border-top:1px solid #fff;border-left:1px solid #fff;border-right:1px solid #404040;border-radius:2px 2px 0 0;box-shadow:inset -1px 0 0 #808080"></div>
<div class="t" id="x527c56" style="left:600.00px;top:178.00px;letter-spacing:0.309px;">Безопасность</div>
<div style="left:306px;top:192px;width:58px;height:18px;box-sizing:border-box;background:#D4D0C8;border-top:1px solid #fff;border-left:1px solid #fff;border-right:1px solid #404040;border-radius:2px 2px 0 0;box-shadow:inset -1px 0 0 #808080"></div>
<div class="t" id="x7cd299" style="left:315.00px;top:196.00px;letter-spacing:0.067px;">General</div>
<div style="left:364px;top:192px;width:60px;height:18px;box-sizing:border-box;background:#D4D0C8;border-top:1px solid #fff;border-left:1px solid #fff;border-right:1px solid #404040;border-radius:2px 2px 0 0;box-shadow:inset -1px 0 0 #808080"></div>
<div class="t" id="x2db64f" style="left:374.00px;top:196.00px;letter-spacing:-0.200px;">Address</div>
<div style="left:424px;top:192px;width:60px;height:18px;box-sizing:border-box;background:#D4D0C8;border-top:1px solid #fff;border-left:1px solid #fff;border-right:1px solid #404040;border-radius:2px 2px 0 0;box-shadow:inset -1px 0 0 #808080"></div>
<div class="t" id="xd32f4c" style="left:433.00px;top:196.00px;letter-spacing:0.200px;">Account</div>
<div style="left:484px;top:192px;width:49px;height:18px;box-sizing:border-box;background:#D4D0C8;border-top:1px solid #fff;border-left:1px solid #fff;border-right:1px solid #404040;border-radius:2px 2px 0 0;box-shadow:inset -1px 0 0 #808080"></div>
<div class="t" id="x3f999e" style="left:493.00px;top:196.00px;letter-spacing:-0.067px;">Profile</div>
<div style="left:533px;top:192px;width:76px;height:18px;box-sizing:border-box;background:#D4D0C8;border-top:1px solid #fff;border-left:1px solid #fff;border-right:1px solid #404040;border-radius:2px 2px 0 0;box-shadow:inset -1px 0 0 #808080"></div>
<div class="t" id="xcc2123" style="left:544.00px;top:196.00px;letter-spacing:-0.022px;">Telephones</div>
<div style="left:609px;top:192px;width:79px;height:18px;box-sizing:border-box;background:#D4D0C8;border-top:1px solid #fff;border-left:1px solid #fff;border-right:1px solid #404040;border-radius:2px 2px 0 0;box-shadow:inset -1px 0 0 #808080"></div>
<div class="t" id="x8111eb" style="left:619.00px;top:196.00px;letter-spacing:-0.055px;">Organization</div>
<div style="left:306px;top:210px;width:73px;height:18px;box-sizing:border-box;background:#D4D0C8;border-top:1px solid #fff;border-left:1px solid #fff;border-right:1px solid #404040;border-radius:2px 2px 0 0;box-shadow:inset -1px 0 0 #808080"></div>
<div class="t" id="x3aca2b" style="left:312.00px;top:214.00px;letter-spacing:-0.200px;">Environment</div>
<div style="left:379px;top:210px;width:55px;height:18px;box-sizing:border-box;background:#D4D0C8;border-top:1px solid #fff;border-left:1px solid #fff;border-right:1px solid #404040;border-radius:2px 2px 0 0;box-shadow:inset -1px 0 0 #808080"></div>
<div class="t" id="xb51399" style="left:384.00px;top:214.00px;letter-spacing:-0.086px;">Sessions</div>
<div style="left:434px;top:210px;width:83px;height:18px;box-sizing:border-box;background:#D4D0C8;border-top:1px solid #fff;border-left:1px solid #fff;border-right:1px solid #404040;border-radius:2px 2px 0 0;box-shadow:inset -1px 0 0 #808080"></div>
<div class="t" id="xba73e5" style="left:439.00px;top:214.00px;letter-spacing:-0.077px;">Remote control</div>
<div style="left:647px;top:210px;width:41px;height:18px;box-sizing:border-box;background:#D4D0C8;border-top:1px solid #fff;border-left:1px solid #fff;border-right:1px solid #404040;border-radius:2px 2px 0 0;box-shadow:inset -1px 0 0 #808080"></div>
<div class="t" id="xc1d51c" style="left:652.00px;top:214.00px;letter-spacing:-0.200px;">COM+</div>
<div style="left:516px;top:208px;width:132px;height:21px;box-sizing:border-box;background:#D4D0C8;border-top:1px solid #fff;border-left:1px solid #fff;border-right:1px solid #404040;border-radius:2px 2px 0 0;box-shadow:inset -1px 0 0 #808080"></div>
<div class="t" id="x792a7b" style="left:525.00px;top:212.00px;letter-spacing:-0.200px;">Terminal Services Profile</div>
<div class="t" id="x6e5af8" style="left:319.00px;top:242.00px;letter-spacing:-0.158px;">Use this tab to configure the Terminal Services user profile. Settings in this</div>
<div class="t" id="x4d3738" style="left:319.00px;top:255.00px;letter-spacing:-0.129px;">profile apply to Terminal Services.</div>
<div style="left:319px;top:283px;width:356px;height:90px;box-sizing:border-box;border:1px solid #808080;box-shadow:1px 1px 0 #fff,inset 1px 1px 0 #fff"></div>
<div style="left:327px;top:279px;width:146px;height:8px;background:#D4D0C8;"></div>
<div class="t" id="xcfe0b9" style="left:329.00px;top:278.00px;letter-spacing:-0.200px;">Terminal Services User Profile</div>
<div class="t" id="x4ec818" style="left:332.00px;top:303.00px;letter-spacing:-0.200px;">Profile Path:</div>
<div style="left:332px;top:321px;width:331px;height:23px;box-sizing:border-box;background:#fff;border-top:1px solid #808080;border-left:1px solid #808080;border-right:1px solid #fff;border-bottom:1px solid #fff;box-shadow:inset 1px 1px 0 #404040,inset -1px -1px 0 #D4D0C8"></div>
<div style="left:319px;top:394px;width:356px;height:118px;box-sizing:border-box;border:1px solid #808080;box-shadow:1px 1px 0 #fff,inset 1px 1px 0 #fff"></div>
<div style="left:327px;top:390px;width:150px;height:8px;background:#D4D0C8;"></div>
<div class="t" id="x4dc593" style="left:329.00px;top:389.00px;letter-spacing:-0.229px;">Terminal Services Home Folder</div>
<svg style="left:333px;top:421px" width="12" height="12" viewBox="0 0 12 12"><use href="#radio_on"/></svg>
<div class="t" id="x269e9a" style="left:350.00px;top:422.00px;letter-spacing:0.067px;">Local path</div>
<div style="left:413px;top:419px;width:249px;height:23px;box-sizing:border-box;background:#fff;border-top:1px solid #808080;border-left:1px solid #808080;border-right:1px solid #fff;border-bottom:1px solid #fff;box-shadow:inset 1px 1px 0 #404040,inset -1px -1px 0 #D4D0C8"></div>
<svg style="left:333px;top:467px" width="12" height="12" viewBox="0 0 12 12"><use href="#radio_off"/></svg>
<div class="t" id="xb314d7" style="left:350.00px;top:468.00px;letter-spacing:0.029px;">Connect:</div>
<div style="left:413px;top:466px;width:48px;height:21px;box-sizing:border-box;background:#D4D0C8;border-top:1px solid #808080;border-left:1px solid #808080;border-right:1px solid #fff;border-bottom:1px solid #fff;box-shadow:inset 1px 1px 0 #404040,inset -1px -1px 0 #D4D0C8"></div>
<div style="left:443px;top:468px;width:16px;height:17px;box-sizing:border-box;background:#D4D0C8;border-top:1px solid #D4D0C8;border-left:1px solid #D4D0C8;border-right:1px solid #404040;border-bottom:1px solid #404040;box-shadow:inset 1px 1px 0 #fff,inset -1px -1px 0 #808080"></div>
<svg style="left:443px;top:468px" width="16" height="17"><path d="M5 7h7l-3.5 4z" fill="#808080"/></svg>
<div class="t" id="xdb7ab9" style="left:479.00px;top:469.00px;letter-spacing:0.600px;">To:</div>
<div style="left:517px;top:466px;width:146px;height:23px;box-sizing:border-box;background:#D4D0C8;border-top:1px solid #808080;border-left:1px solid #808080;border-right:1px solid #fff;border-bottom:1px solid #fff;box-shadow:inset 1px 1px 0 #404040,inset -1px -1px 0 #D4D0C8"></div>
<svg style="left:319px;top:527px" width="13" height="13" viewBox="0 0 13 13"><use href="#check"/></svg>
<div class="t" id="xf6e2a6" style="left:337.00px;top:528.00px;letter-spacing:-0.200px;">Allow logon to terminal server</div>
<div style="left:453px;top:594px;width:75px;height:23px;box-sizing:border-box;border:1px solid #000;background:#D4D0C8;box-shadow:inset 1px 1px 0 #fff,inset -1px -1px 0 #404040,inset -2px -2px 0 #808080"></div>
<div style="left:534px;top:594px;width:75px;height:23px;box-sizing:border-box;border-top:1px solid #fff;border-left:1px solid #fff;border-right:1px solid #404040;border-bottom:1px solid #404040;background:#D4D0C8;box-shadow:inset -1px -1px 0 #808080"></div>
<div style="left:615px;top:594px;width:75px;height:23px;box-sizing:border-box;border-top:1px solid #fff;border-left:1px solid #fff;border-right:1px solid #404040;border-bottom:1px solid #404040;background:#D4D0C8;box-shadow:inset -1px -1px 0 #808080"></div>
</div></body></html>
